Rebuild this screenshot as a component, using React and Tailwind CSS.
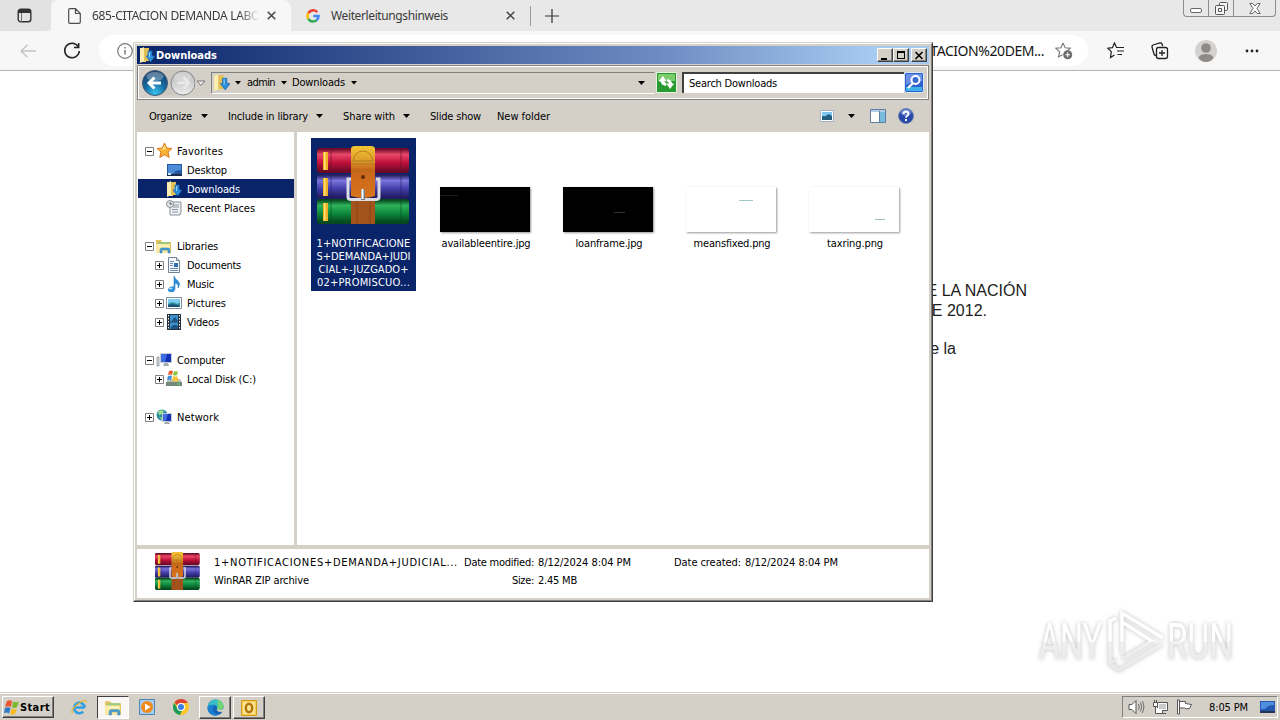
import React, { useLayoutEffect, useRef, useState } from "react";

const UI = "font-['DejaVu_Sans_Condensed','DejaVu_Sans',Verdana,sans-serif] text-[11px] leading-[13px]";

/* Single line of text whose tracking is adjusted to fill the width w. */
function T({ w, className = "", children }) {
  const ref = useRef(null);
  const [ls, setLs] = useState(0);
  useLayoutEffect(() => {
    const el = ref.current;
    const natural = el.getBoundingClientRect().width;
    setLs((w - natural) / el.textContent.length);
  }, [w]);
  return (
    <span ref={ref} className={"inline-block shrink-0 whitespace-nowrap " + className} style={{ letterSpacing: ls + "px" }}>
      {children}
    </span>
  );
}

function Arrow({ className = "" }) {
  return (
    <svg className={"shrink-0 " + className} width="7" height="4" viewBox="0 0 7 4">
      <path d="M0 0h7L3.5 4z" fill="#000" />
    </svg>
  );
}

function SmallArrow({ className = "" }) {
  return (
    <svg className={"shrink-0 " + className} width="6" height="4" viewBox="0 0 6 4">
      <path d="M0 0h6L3 3.500z" fill="#000" />
    </svg>
  );
}

function Books({ width, height, id }) {
  const rows = [
    [3, "#e8486a", "#c3123c", "#6d0a26"],
    [29, "#7a74dc", "#4540ac", "#221d62"],
    [54, "#2fb25c", "#0d8a3c", "#06491f"],
  ];
  return (
    <svg width={width} height={height} viewBox="0 0 93 80" preserveAspectRatio="none" className="shrink-0">
      <defs>
        {rows.map((r, i) => (
          <linearGradient key={i} id={id + i} x1="0" y1="0" x2="0" y2="1">
            <stop offset="0" stopColor={r[3]} />
            <stop offset=".25" stopColor={r[1]} />
            <stop offset=".6" stopColor={r[2]} />
            <stop offset="1" stopColor={r[3]} />
          </linearGradient>
        ))}
        <linearGradient id={id + "b"} x1="0" y1="0" x2="0" y2="1">
          <stop offset="0" stopColor="#f4c534" />
          <stop offset=".3" stopColor="#d99a2b" />
          <stop offset=".45" stopColor="#c9661a" />
          <stop offset="1" stopColor="#d9741c" />
        </linearGradient>
      </defs>
      {rows.map((r, i) => (
        <g key={i}>
          <rect x="0" y={r[0] - 1} width="92" height="25" rx="3" fill={r[3]} />
          <rect x="0" y={r[0]} width="92" height="22" rx="3" fill={"url(#" + id + i + ")"} />
          <path d={`M6 ${r[0] + 3}h5v18h-5z`} fill="#f0b128" />
          <path d={`M7 ${r[0] + 3}h1.500v18h-1.500z`} fill="#ffe271" />
          <path d={`M14 ${r[0] + 1}v21M84 ${r[0] + 1}v21`} stroke={r[3]} strokeWidth="1" opacity=".6" />
        </g>
      ))}
      <rect x="34" y="54" width="24" height="24" fill="#a3541c" />
      <path d="M40 54v24M53 54v24" stroke="#6d3410" opacity=".5" />
      <path d="M34 3q0-3 4-3h16q4 0 4 3v47q-12 4-24 0z" fill={"url(#" + id + "b)"} />
      <path d="M36 15q2-10 10-10t10 10zM34 18h24M34 25h24" stroke="#a9701a" fill="none" opacity=".8" />
      <circle cx="46" cy="31" r="2" fill="#5c2c0c" />
      <path d="M34 33h-3v18q0 2.500 3 2.500h25q3 0 3-2.500V33h-3" fill="none" stroke="#dcdce4" strokeWidth="3" />
      <path d="M46 43v11" stroke="#7d7d84" strokeWidth="4" />
      <path d="M45.500 43v10" stroke="#fff" strokeWidth="2" />
    </svg>
  );
}

function DownloadIcon({ size = 16 }) {
  return (
    <svg width={size} height={size} viewBox="0 0 16 16" className="shrink-0">
      <path d="M1 1h6v14H1z" fill="#f3dc88" />
      <path d="M1 2l4-2v14l-4 2z" fill="#fbeeb0" />
      <path d="M5 1h5v13H5z" fill="#e3bf58" />
      <path d="M9 4h4v5h3l-4.500 6L7 9h2z" fill="#2d8fdc" stroke="#1767ad" strokeWidth=".7" />
      <path d="M10 5h1v5h-1z" fill="#8fd0fb" />
    </svg>
  );
}

function FolderIcon({ w = 16, h = 16 }) {
  return (
    <svg width={w} height={h} viewBox="0 0 16 16" className="shrink-0">
      <path d="M0 2h5l1 2h9v11H0z" fill="#e6c35c" />
      <path d="M2 4h12v6H2z" fill="#9cca7a" />
      <path d="M0 6h14v9H0z" fill="#fbe9a3" />
      <path d="M2 8h11" stroke="#fff7cf" />
      <path d="M4 15v-3q0-2 2-2h6q2 0 2 2v3h-2v-3H6v3z" fill="#4a9fd4" stroke="#2a78ad" strokeWidth=".5" />
    </svg>
  );
}

const icons = {
  star: (
    <svg width="17" height="17" viewBox="0 0 17 17">
      <path d="M8.500 1l2.200 5 5.300.5-4 3.600 1.200 5.400-4.700-2.800-4.700 2.800L5 10.100 1 6.500 6.300 6z" fill="#f9b233" stroke="#d9771d" />
      <path d="M8.500 3l1.500 4-4 1z" fill="#ffe38a" />
    </svg>
  ),
  desktop: (
    <svg width="16" height="16" viewBox="0 0 16 16">
      <path d="M1 2h15v11H1z" fill="#2457a0" />
      <path d="M2 3h13v5q-6 0-8 4H2z" fill="#4b8bd8" />
      <path d="M1 12h15v2H1z" fill="#1b2d4d" />
      <path d="M2 11h3v2H2z" fill="#cfe4f8" />
    </svg>
  ),
  down: <DownloadIcon />,
  recent: (
    <svg width="16" height="16" viewBox="0 0 16 16">
      <path d="M4 2h11v10l-1 3H4z" fill="#eef0f2" stroke="#8a9097" />
      <path d="M7 5h6M7 7h6M6 9.500h6M6 12h6" stroke="#8b97a3" />
      <circle cx="4" cy="4" r="3.500" fill="#dfe6ec" stroke="#8a9097" />
      <path d="M4 2v2h2" stroke="#555" fill="none" />
    </svg>
  ),
  lib: <FolderIcon />,
  doc: (
    <svg width="16" height="16" viewBox="0 0 16 16">
      <path d="M2.500.5h8l3 3v12h-11z" fill="#f4f8fc" stroke="#74818e" />
      <path d="M10.500.5v3h3" fill="#dbe6f0" stroke="#74818e" />
      <path d="M4 4.500h4M4 6.500h3M4 8.500h3M4 11.500h8M4 13.500h8" stroke="#6d8db0" />
      <path d="M8 6h4v4H8z" fill="#2e6fb4" />
    </svg>
  ),
  music: (
    <svg width="16" height="16" viewBox="0 0 16 16">
      <path d="M8 0q1 3 4 5 3 3 0 7 1-4-3-5v6q-1 4-5 3-3-1-1-4 2-2 5-1V0z" fill="#2a8fdb" stroke="#1b6db4" strokeWidth=".5" />
      <ellipse cx="4.500" cy="12.500" rx="2" ry="1" fill="#a7daf9" />
    </svg>
  ),
  pic: (
    <svg width="16" height="16" viewBox="0 0 16 16">
      <path d="M.5 2.500h15v11H.5z" fill="#fff" stroke="#7e8b98" />
      <path d="M2 4h12v8H2z" fill="#7ccdf0" />
      <path d="M2 9q4-3 7-1t5-1v5H2z" fill="#2f8f98" />
      <path d="M2 10q6-2 12 1v1H2z" fill="#1c4f7c" />
    </svg>
  ),
  video: (
    <svg width="16" height="16" viewBox="0 0 16 16">
      <path d="M1 0h14v16H1z" fill="#23303c" />
      <path d="M4 1h8v6.500H4zM4 8.500h8V15H4z" fill="#3c93cf" />
      <path d="M6 6l3-3 3 4v.5H6zM5 13q3-4 7-1v3H5z" fill="#1e5385" />
      <path d="M2.500 1v14M13.500 1v14" stroke="#fff" strokeDasharray="1.500 1.500" />
    </svg>
  ),
  computer: (
    <svg width="17" height="16" viewBox="0 0 17 16">
      <path d="M1 5h2v9H1z" fill="#d9dde2" stroke="#7f868e" strokeWidth=".7" />
      <path d="M4 1h12v10H4z" fill="#c9ced6" />
      <path d="M5 2h10v8H5z" fill="#1733b5" />
      <path d="M5 2h6l-2 8H5z" fill="#3f6be0" />
      <path d="M8 11h4l1 3H7z" fill="#a8adb5" />
    </svg>
  ),
  disk: (
    <svg width="17" height="17" viewBox="0 0 17 17">
      <path d="M2 9h12l2 4v3H0v-3z" fill="#b7bcc1" />
      <path d="M0 12h16v4H0z" fill="#71877a" />
      <path d="M11 13.500h3v1h-3z" fill="#63e063" />
      <path d="M3 1q2-1 4 0L6 5Q4 4 2 5z" fill="#e8602c" />
      <path d="M8 1q2 1 4 0l-1 4q-2 1-4 0z" fill="#8cc63e" />
      <path d="M2 6q2-1 4 0l-1 4q-2-1-4 0z" fill="#3f8fdd" />
      <path d="M7 6q2 1 4 0l2 5q-4 1-7 0z" fill="#f5c23c" />
    </svg>
  ),
  network: (
    <svg width="17" height="16" viewBox="0 0 17 16">
      <circle cx="6" cy="6" r="5.500" fill="#2d8f9e" />
      <path d="M2 3q3-3 6-1L6 5 3 6zM3 8l4 1-1 2z" fill="#9be08a" />
      <path d="M6 4h10v9H6z" fill="#c5cbd3" />
      <path d="M7 5h8v7H7z" fill="#1733b5" />
      <path d="M7 5h5l-2 7H7z" fill="#3f6be0" />
      <path d="M9 13h4l1 2H8z" fill="#a8adb5" />
    </svg>
  ),
};

const tree = [
  ["Favorites", 46, "star", 0, "-"],
  ["Desktop", 40, "desktop", 1, ""],
  ["Downloads", 53, "down", 1, ""],
  ["Recent Places", 68, "recent", 1, ""],
  null,
  ["Libraries", 41, "lib", 0, "-"],
  ["Documents", 54, "doc", 1, "+"],
  ["Music", 27, "music", 1, "+"],
  ["Pictures", 39, "pic", 1, "+"],
  ["Videos", 32, "video", 1, "+"],
  null,
  ["Computer", 48, "computer", 0, "-"],
  ["Local Disk (C:)", 69, "disk", 1, "+"],
  null,
  ["Network", 42, "network", 0, "+"],
];

function Expander({ sign }) {
  if (!sign) return <span className="w-[9px] shrink-0" />;
  return (
    <svg width="9" height="9" viewBox="0 0 9 9" className="mt-[2px] shrink-0">
      <path d="M.5.5h8v8h-8z" fill="#fff" stroke="#808080" />
      <path d={sign === "+" ? "M2 4.500h5M4.500 2v5" : "M2 4.500h5"} stroke="#000" />
    </svg>
  );
}

function Tree() {
  return (
    <div className="w-[157px] shrink-0 bg-white pt-[9px]">
      {tree.map((r, i) =>
        r === null ? (
          <div key={i} className="h-[19px]" />
        ) : (
          <div
            key={i}
            className={
              "ml-px flex h-[19px] items-center " +
              (r[3] ? "pl-[17px] " : "pl-[7px] ") +
              (r[0] === "Downloads" ? "bg-[#0a246a] text-white" : "text-black")
            }
          >
            <Expander sign={r[4]} />
            <span className="ml-[2px] flex w-[17px] shrink-0 items-center">{icons[r[2]]}</span>
            <T w={r[1]} className="ml-[4px] mt-[2px]">{r[0]}</T>
          </div>
        )
      )}
    </div>
  );
}

function File({ name, w, dark, mark }) {
  return (
    <div className="flex h-[153px] w-[105px] flex-col items-center pt-[49px]">
      <div
        className={
          "mr-[3px] h-[45px] w-[90px] shadow-[1px_1px_2px_#999] " + (dark ? "bg-black " : "bg-white ") + mark[1]
        }
      >
        <div className={"h-px " + mark[0]} />
      </div>
      <div className="mr-[1px] mt-[5px] flex h-[13px] justify-center"><T w={w}>{name}</T></div>
    </div>
  );
}

function CaptionBtn({ children, className = "" }) {
  return (
    <div className={"flex h-[14px] w-4 items-center justify-center border border-b-[#404040] border-l-white border-r-[#404040] border-t-white bg-[#d4d0c8] shadow-[inset_-1px_-1px_#808080] " + className}>
      <svg width="10" height="9" viewBox="0 0 10 9">{children}</svg>
    </div>
  );
}

function ExplorerWindow() {
  return (
    <div className={"absolute left-[133px] top-[42px] flex h-[560px] w-[800px] flex-col border border-b-[#404040] border-l-[#d4d0c8] border-r-[#404040] border-t-[#d4d0c8] bg-[#d4d0c8] text-black " + UI}>
      <div className="flex min-h-0 flex-1 flex-col border border-b-[#808080] border-l-white border-r-[#808080] border-t-white pl-[2px] pt-[2px]">
        <div className="mr-[2px] flex h-[18px] shrink-0 items-center bg-[linear-gradient(90deg,#0a246a,#6f8ec4_67%,#a6caf0_93%)] pl-[2px] pr-[2px]">
          <DownloadIcon />
          <T w={61} className="ml-[1px] font-bold text-white">Downloads</T>
          <CaptionBtn className="ml-auto"><path d="M1 7h6v2H1z" /></CaptionBtn>
          <CaptionBtn><path d="M1 0h8v8H1zM2 2v5h6V2z" fillRule="evenodd" /></CaptionBtn>
          <CaptionBtn className="ml-[2px]"><path d="M1.500 1l7 7M8.500 1l-7 7" stroke="#000" strokeWidth="1.600" /></CaptionBtn>
        </div>

        <div className="mr-[2px] mt-[1px] flex h-[35px] shrink-0 items-center border border-[#808080] pl-[3px] shadow-[inset_1px_1px_#fff,inset_-1px_-1px_#fff]">
          <svg width="54" height="28" viewBox="0 0 54 28" className="mt-px shrink-0">
            <defs>
              <radialGradient id="back" cx=".5" cy=".9" r=".9">
                <stop offset="0" stopColor="#37c3ef" />
                <stop offset=".5" stopColor="#15699f" />
                <stop offset="1" stopColor="#1c4068" />
              </radialGradient>
              <linearGradient id="fwd" x1="0" y1="0" x2="0" y2="1">
                <stop offset="0" stopColor="#b9b9b9" />
                <stop offset=".5" stopColor="#cfcfcf" />
                <stop offset="1" stopColor="#eee" />
              </linearGradient>
            </defs>
            <path d="M2 8Q6 1 14 1h28q8 0 11 7v10q-3 8-11 8H14Q6 26 2 18z" fill="#c3bfb8" opacity=".5" />
            <circle cx="14" cy="14" r="12.500" fill="url(#back)" stroke="#3c5878" />
            <ellipse cx="14" cy="7.500" rx="8.500" ry="4.500" fill="#fff" opacity=".3" />
            <path d="M20 14H9M13.500 8.500L8 14l5.500 5.500" fill="none" stroke="#fff" strokeWidth="3" />
            <circle cx="42" cy="14" r="12" fill="url(#fwd)" stroke="#84888c" />
            <ellipse cx="42" cy="8" rx="8.500" ry="5" fill="#fff" opacity=".3" />
            <path d="M36 14h11M42.500 8.500L48 14l-5.500 5.500" fill="none" stroke="#e9e9e9" strokeWidth="2.500" />
          </svg>
          <svg width="10" height="7" viewBox="0 0 10 7" className="ml-px mt-px shrink-0">
            <path d="M1 1h8L5 5.500z" fill="#eee" stroke="#777" />
          </svg>
          <div className="ml-[5px] flex h-[22px] w-[444px] shrink-0 items-center border border-b-white border-l-[#808080] border-r-[#d4d0c8] border-t-[#808080] pl-[1px]">
            <DownloadIcon size={17} />
            <SmallArrow className="ml-[5px]" />
            <T w={28} className="ml-[6px]">admin</T>
            <SmallArrow className="ml-[6px]" />
            <T w={53} className="ml-[5px]">Downloads</T>
            <SmallArrow className="ml-[6px]" />
            <Arrow className="ml-auto mr-[9px]" />
          </div>
          <svg width="21" height="21" viewBox="0 0 21 21" className="ml-[1px] shrink-0">
            <path d="M.5.5h20v20H.5z" fill="#299a31" stroke="#e5f5e0" />
            <path d="M2 2h17v7H2z" fill="#7ccb6d" />
            <path d="M7 4v3q0 3 3.500 4v2.500Q5 13 4.500 9H3z" fill="#fff" />
            <path d="M2.800 9.500L7 4l3.500 5.500H8q.5 1.500 2 2v2.500Q5 13 5 9.500z" fill="#fff" />
            <path d="M18.200 11.500L14 17l-3.500-5.500H13q-.5-1.500-2-2V7q5 1 5 4.500z" fill="#fff" />
          </svg>
          <div className="ml-[5px] flex h-[21px] w-[222px] shrink-0 items-center border-l-2 border-t-2 border-l-[#404040] border-t-[#404040] bg-white pl-[5px] pb-px">
            <T w={88}>Search Downloads</T>
          </div>
          <svg width="20" height="21" viewBox="0 0 20 21" className="shrink-0">
            <rect x=".5" y=".5" width="19" height="20" rx="2" fill="#2c62cd" stroke="#dce6f5" />
            <path d="M2 2h16v7Q9 9 2 13z" fill="#6c91e4" />
            <path d="M2 15h16v4H2z" fill="#3fb3e9" />
            <circle cx="11.500" cy="8" r="4" fill="#3b6ace" stroke="#fff" strokeWidth="2" />
            <path d="M8.500 11.500L4 16" stroke="#fff" strokeWidth="2.400" />
          </svg>
        </div>

        <div className="flex h-[32px] shrink-0 items-center pl-[12px] pr-[17px]">
          <T w={43}>Organize</T>
          <Arrow className="ml-[9px]" />
          <T w={80} className="ml-[20px]">Include in library</T>
          <Arrow className="ml-[8px]" />
          <T w={52} className="ml-[20px]">Share with</T>
          <Arrow className="ml-[8px]" />
          <T w={51} className="ml-[20px]">Slide show</T>
          <T w={53} className="ml-[16px]">New folder</T>
          <svg width="14" height="12" viewBox="0 0 14 12" className="ml-auto">
            <path d="M.5.5h13v11H.5z" fill="#fff" stroke="#9fb3c5" />
            <path d="M2 2h10v7H2z" fill="#7cc3ed" />
            <path d="M2 6q4 1 5-1t5 1v4H2z" fill="#235d7d" />
          </svg>
          <Arrow className="ml-[14px]" />
          <svg width="16" height="14" viewBox="0 0 16 14" className="ml-[15px]">
            <path d="M.5.500h15v13H.5z" fill="#fff" stroke="#5b7fa4" />
            <path d="M1 1h14v2H1z" fill="#b4cde4" />
            <path d="M10 3h5v10h-5z" fill="#77bbdf" />
            <path d="M9.500 2v11" stroke="#5b7fa4" />
          </svg>
          <svg width="16" height="16" viewBox="0 0 16 16" className="ml-[12px]">
            <circle cx="8" cy="8" r="7.500" fill="#2647a7" stroke="#6f83b5" />
            <ellipse cx="8" cy="4.500" rx="5.500" ry="3.500" fill="#7b97dc" opacity=".7" />
            <path d="M5.500 6q0-2.500 2.500-2.500T10.500 6Q10.500 7 9 8q-1 .6-1 1.800" fill="none" stroke="#fff" strokeWidth="1.800" />
            <path d="M7 11h2v2H7z" fill="#fff" />
          </svg>
        </div>

        <div className="-ml-px flex h-[413px] shrink-0 bg-[#d4d0c8] pl-px pr-[2px]">
          <Tree />
          <div className="ml-[3px] flex min-w-0 flex-1 gap-[18px] bg-white pl-[14px] pt-[6px]">
            <div className="flex h-[153px] w-[105px] flex-col items-center bg-[#0a246a] pt-[8px] text-white">
              <Books width={93} height={80} id="big" />
              <div className="mt-[11px] flex flex-col items-center">
                <T w={94}>1+NOTIFICACIONE</T>
                <T w={94}>S+DEMANDA+JUDI</T>
                <T w={90}>CIAL+-JUZGADO+</T>
                <T w={93}>02+PROMISCUO...</T>
              </div>
            </div>
            <File name="availableentire.jpg" w={89} dark mark={["w-[18px] bg-[#1c1c1c]", "pt-[8px]"]} />
            <File name="loanframe.jpg" w={67} dark mark={["w-[11px] bg-[#3a3028]", "pl-[51px] pt-[25px]"]} />
            <File name="meansfixed.png" w={77} mark={["w-[14px] bg-[#9fc8c8]", "pl-[53px] pt-[13px]"]} />
            <File name="taxring.png" w={56} mark={["w-[10px] bg-[#9fb8b8]", "pl-[66px] pt-[32px]"]} />
          </div>
        </div>

        <div className="mr-[2px] mt-[4px] flex h-[49px] shrink-0 bg-white pl-[18px] pt-[3px]">
          <Books width={45} height={39} id="small" />
          <div className="ml-[14px] mt-[4px] flex w-[246px] flex-col gap-[5px]">
            <T w={244} className="self-start">1+NOTIFICACIONES+DEMANDA+JUDICIAL...</T>
            <T w={95} className="self-start">WinRAR ZIP archive</T>
          </div>
          <div className="ml-[4px] mt-[4px] flex w-[70px] flex-col items-end gap-[5px]">
            <T w={70}>Date modified:</T>
            <T w={22}>Size:</T>
          </div>
          <div className="ml-[4px] mt-[4px] flex w-[136px] flex-col items-start gap-[5px]">
            <T w={93}>8/12/2024 8:04 PM</T>
            <T w={39}>2.45 MB</T>
          </div>
          <T w={67} className="mt-[4px]">Date created:</T>
          <T w={93} className="ml-[4px] mt-[4px]">8/12/2024 8:04 PM</T>
        </div>
      </div>
    </div>
  );
}

function BrowserTabs() {
  return (
    <div className="flex h-[31px] shrink-0 bg-[#e8e8e8] text-[12px] text-[#3b3b3b]">
      <div className="flex w-[51px] items-center justify-center rounded-br-[7px] bg-[#e2e2e2]">
        <svg width="15" height="15" viewBox="0 0 15 15" className="mr-[3px]">
          <rect x="1.200" y="1.200" width="12.600" height="12.600" rx="2.500" fill="none" stroke="#333" strokeWidth="1.400" />
          <path d="M1 2h13v3H1z" fill="#333" />
          <path d="M4.500 5v9" stroke="#777" />
        </svg>
      </div>
      <div className="flex w-[240px] items-center rounded-t-[8px] bg-[#f7f7f7] pl-[17px]">
        <svg width="13" height="16" viewBox="0 0 13 16">
          <path d="M2 .7h5.500L12.300 5.500V14q0 1.300-1.300 1.300H2Q.7 15.300.7 14V2Q.7.7 2 .7zM7.500 1v4.500H12" fill="none" stroke="#4d4d4d" strokeWidth="1.200" />
        </svg>
        <div className="ml-[11px] w-[167px] overflow-hidden [mask-image:linear-gradient(90deg,#000_88%,transparent)]">
          <T w={168} className="font-['Noto_Sans','Open_Sans',sans-serif]">685-CITACION DEMANDA LABO</T>
        </div>
        <svg width="9" height="9" viewBox="0 0 9 9" className="ml-[8px]"><path d="M.7.7l7.600 7.600M8.300.7L.7 8.300" stroke="#444" strokeWidth="1.500" /></svg>
      </div>
      <div className="flex w-[239px] items-center border-r border-[#e8e8e8] pl-[15px]">
        <svg width="14" height="14" viewBox="0 0 14 14" fill="none" strokeWidth="2.600">
          <path d="M11.300 3.200A5.500 5.500 0 0 0 2.300 4.200" stroke="#ea4335" />
          <path d="M2.300 4.200a5.500 5.500 0 0 0 0 5.600" stroke="#fbbc05" />
          <path d="M2.300 9.800a5.500 5.500 0 0 0 8.400 1.300" stroke="#34a853" />
          <path d="M10.700 11.100A5.500 5.500 0 0 0 12.500 7H7.300" stroke="#4285f4" />
        </svg>
        <T w={117} className="ml-[11px] font-['Noto_Sans','Open_Sans',sans-serif]">Weiterleitungshinweis</T>
        <svg width="9" height="9" viewBox="0 0 9 9" className="ml-[58px]"><path d="M.7.7l7.600 7.600M8.300.7L.7 8.300" stroke="#444" strokeWidth="1.500" /></svg>
      </div>
      <div className="mt-[6px] h-[20px] w-px bg-[#999]" />
      <svg width="14" height="14" viewBox="0 0 14 14" className="ml-[14px] mt-[9px]"><path d="M7 0v14M0 7h14" stroke="#333" strokeWidth="1.200" /></svg>
      <div className="ml-auto mr-[4px] flex h-[17px] w-[93px] rounded-b-[4px] border border-t-0 border-[#8c8c8c]">
        <div className="flex w-[25px] items-end justify-center border-r border-[#8c8c8c] pb-[3px]">
          <svg width="13" height="5" viewBox="0 0 13 5"><rect x=".5" y=".5" width="11" height="4" rx="1.500" fill="#fff" stroke="#666" /></svg>
        </div>
        <div className="flex w-[25px] items-center justify-center border-r border-[#8c8c8c]">
          <svg width="13" height="13" viewBox="0 0 13 13" fill="#f4f4f4" stroke="#555">
            <rect x="4.500" y=".5" width="8" height="8" rx="1" /><rect x=".5" y="3.500" width="9" height="9" rx="1" /><path d="M3.500 6.500h3v3h-3z" />
          </svg>
        </div>
        <div className="flex flex-1 items-center justify-center">
          <svg width="12" height="11" viewBox="0 0 12 11"><path d="M.8.5h3L6 3 8.200.5h3L8 5.500l3.200 5h-3L6 8l-2.200 2.500h-3L4 5.500z" fill="#fff" stroke="#666" /></svg>
        </div>
      </div>
    </div>
  );
}

function BrowserBar() {
  return (
    <div className="flex h-[40px] shrink-0 items-center border-b border-[#b4b4b4] bg-[#f7f7f7] pl-[20px]">
      <svg width="17" height="14" viewBox="0 0 17 14" fill="none" stroke="#c2c2c2" strokeWidth="1.300"><path d="M16 7H1M7.500.7L1 7l6.500 6.300" /></svg>
      <svg width="18" height="18" viewBox="0 0 18 18" className="ml-[26px]" fill="none" stroke="#222" strokeWidth="1.500">
        <path d="M15 4.300A7.300 7.300 0 1 0 16.300 9M15.700 1v4.500H11" />
      </svg>
      <div className="ml-[18px] flex h-[31px] w-[989px] items-center justify-end rounded-full bg-white pl-[18px] pr-[14px]">
        <svg width="16" height="16" viewBox="0 0 16 16" className="mr-auto" fill="none" stroke="#777">
          <circle cx="8" cy="8" r="7.300" strokeWidth="1.200" /><path d="M8 7v4.500M8 4v1.500" strokeWidth="1.500" />
        </svg>
        <T w={118} className="font-['Noto_Sans','Open_Sans',sans-serif] text-[14px] text-[#151515]">ITACION%20DEM...</T>
        <svg width="18" height="18" viewBox="0 0 18 18" className="ml-[11px] mr-px" fill="none" stroke="#777" strokeWidth="1.100">
          <path d="M8 1l2.100 4.700 5.200.5-3.800 3.500M8 1L5.900 5.700.7 6.200l4 3.700L3.500 15l4-2.300" />
          <circle cx="12.700" cy="12.700" r="4.500" fill="#6a6a6a" stroke="none" /><path d="M10.200 12.700h5M12.700 10.200v5" stroke="#fff" />
        </svg>
      </div>
      <svg width="17" height="17" viewBox="0 0 17 17" className="ml-[19px]" fill="none" stroke="#222" strokeWidth="1.200">
        <path d="M11 5.500H9.500L7.500 1 5.400 5.700.8 6.200l3.500 3.500L3.500 15.500l4-2.500M11 5.500h6M10 9h7M10.500 12.500H15" />
      </svg>
      <svg width="18" height="18" viewBox="0 0 18 18" className="ml-[27px]" fill="none" stroke="#222" strokeWidth="1.300">
        <path d="M5 13.500Q3.300 13.500 3 12L1 5Q.8 3.500 2 3l7-2q1.500-.3 2 1l.7 2" />
        <rect x="5.500" y="5.500" width="11" height="11" rx="2" /><path d="M11 8v6M8 11h6" />
      </svg>
      <svg width="22" height="22" viewBox="0 0 22 22" className="ml-[26px]">
        <circle cx="11" cy="11" r="11" fill="#d4d2d0" /><circle cx="11" cy="8" r="4.800" fill="#8f8b88" />
        <path d="M3.500 18q1-4 7.500-4t7.500 4q-3 4-7.500 4t-7.500-4z" fill="#8f8b88" />
      </svg>
      <svg width="14" height="4" viewBox="0 0 14 4" className="ml-[28px]" fill="#222"><circle cx="2" cy="2" r="1.400" /><circle cx="7" cy="2" r="1.400" /><circle cx="12" cy="2" r="1.400" /></svg>
    </div>
  );
}

function Watermark() {
  return (
    <svg className="absolute left-[1030px] top-[604px] drop-shadow-[0_0_2px_rgba(0,0,0,0.26)]" width="230" height="84" viewBox="0 0 230 84">
      <defs>
        <linearGradient id="wm" gradientUnits="userSpaceOnUse" x1="0" y1="10" x2="0" y2="66">
          <stop offset="0" stopColor="#fff" /><stop offset=".48" stopColor="#fff" /><stop offset=".5" stopColor="#f0f0f0" /><stop offset="1" stopColor="#e9e9e9" />
        </linearGradient>
      </defs>
      <g fill="url(#wm)" fontFamily="Roboto, sans-serif" fontSize="50">
        <text x="9" y="55" textLength="63" lengthAdjust="spacingAndGlyphs">ANY</text>
        <text x="137" y="55" textLength="66" lengthAdjust="spacingAndGlyphs">RUN</text>
      </g>
      <g fill="none" stroke="url(#wm)" strokeWidth="3.500">
        <path d="M86 14l-6 3v42l6-3" />
        <path d="M92 50V9l41 25M92 18l30 19-30 18" />
        <path d="M81 61l8 5 43-26" />
      </g>
    </svg>
  );
}

function TaskBtn({ children, pressed }) {
  return (
    <div
      className={
        "flex h-[23px] w-[32px] items-center justify-center border " +
        (pressed
          ? "border-b-white border-l-[#404040] border-r-white border-t-[#404040] bg-[#f8f7f5]"
          : "border-b-[#404040] border-l-white border-r-[#404040] border-t-white bg-[#d4d0c8] shadow-[inset_-1px_-1px_#808080]")
      }
    >
      {children}
    </div>
  );
}

function Taskbar() {
  return (
    <div className={"flex h-[28px] shrink-0 items-start border-t border-[#d4d0c8] bg-[#d4d0c8] pl-[2px] pt-[3px] text-black shadow-[inset_0_1px_#fff] " + UI}>
      <div className="flex h-[22px] w-[52px] items-center border border-b-[#404040] border-l-white border-r-[#404040] border-t-white pl-[1px] shadow-[inset_-1px_-1px_#808080]">
        <svg width="16" height="15" viewBox="0 0 16 15">
          <path d="M3 1q3-1.500 5 0L7 7Q4.500 5.500 1 7z" fill="#e8562a" />
          <path d="M9 1.500q3 1.500 6 0L13 7q-2.500 1.500-5 .5z" fill="#7cb82f" />
          <path d="M1 8q3-1.500 5.500 0L5 13.500Q3 12 0 13z" fill="#2f77c9" />
          <path d="M7.500 8.500q3 1.500 5.500 0l-2 5.500q-2.500 1.500-5 0z" fill="#f6bb26" />
        </svg>
        <T w={30} className="font-bold">Start</T>
      </div>
      <div className="ml-[17px] flex h-[22px] w-[17px] items-center">
        <svg width="17" height="17" viewBox="0 0 17 17" fill="none">
          <path d="M13.500 8.500H4.500M13.700 8.500a5.300 5.300 0 1 0-1.500 4.200" stroke="#2f9fe0" strokeWidth="2.600" />
          <path d="M1.500 14.500Q-1 11 7 5q8-6 8.500-1.500" stroke="#e9b93a" strokeWidth="1.300" />
        </svg>
      </div>
      <div className="ml-[9px]"><TaskBtn pressed><FolderIcon w={17} h={17} /></TaskBtn></div>
      <div className="ml-[10px] flex h-[22px] items-center">
        <svg width="16" height="16" viewBox="0 0 16 16">
          <path d="M.5.5h15v15H.5z" fill="#a9cdee" stroke="#4c84bd" /><circle cx="8" cy="8" r="6" fill="#f08a1d" /><path d="M6 4.500l5.500 3.500L6 11.500z" fill="#fff" />
        </svg>
      </div>
      <div className="ml-[18px] flex h-[22px] items-center">
        <svg width="16" height="16" viewBox="0 0 16 16">
          <circle cx="8" cy="8" r="8" fill="#f9c62b" />
          <path d="M8 0a8 8 0 0 1 7 4H8a4 4 0 0 0-3.700 2.500L1.500 3.300A8 8 0 0 1 8 0z" fill="#db4437" />
          <path d="M1.300 3.700L4.600 10A4 4 0 0 0 8.700 12L7 16A8 8 0 0 1 1.300 3.700z" fill="#1a9c57" />
          <circle cx="8" cy="8" r="4" fill="#fff" /><circle cx="8" cy="8" r="3" fill="#3f7ee8" />
        </svg>
      </div>
      <div className="ml-[10px] flex gap-[2px]">
        <TaskBtn>
          <svg width="17" height="17" viewBox="0 0 17 17">
            <circle cx="8.500" cy="8.500" r="8" fill="#1464b4" />
            <path d="M.7 8Q2 .5 9 .5q7 .5 7.500 6.500 0 4-5 4-2 0-1.500-1 .8-3-2-4Q4 5 .7 8z" fill="#39bfc4" />
            <path d="M10 1q6 1 6.500 6 0 4-5 4-2 0-1.500-1 2-4 0-9z" fill="#6fd672" />
            <path d="M10 10q-1 2 3 3l3.500-.5-1 2Q15 15 17 11L16.500 10 12 11z" fill="#d4d0c8" />
            <path d="M.7 8Q4 4 8 7q-3 1-2 5 2 4 7 3-7 4-11-1.500Q0 11 .7 8z" fill="#1d7fd1" />
          </svg>
        </TaskBtn>
        <TaskBtn>
          <svg width="16" height="16" viewBox="0 0 16 16">
            <path d="M.5.5h15v15H.5z" fill="#f6cf50" stroke="#d39b16" /><path d="M2 2h12v12H2z" fill="#fae394" />
            <ellipse cx="8" cy="8" rx="3.200" ry="4.200" fill="none" stroke="#b27608" strokeWidth="2.400" />
          </svg>
        </TaskBtn>
      </div>
      <div className="ml-auto mr-[2px] flex h-[22px] w-[156px] items-center border border-b-white border-l-[#808080] border-r-white border-t-[#808080] pl-[5px]">
        <svg width="17" height="16" viewBox="0 0 17 16" fill="#fff" stroke="#555">
          <path d="M1 5.500h3l4-4v13l-4-4H1z" /><path d="M10.500 5q1.500 3 0 6M12.500 3.500q2.500 4.500 0 9M14.500 2q3 6 0 12" fill="none" strokeWidth=".8" />
        </svg>
        <svg width="17" height="16" viewBox="0 0 17 16" className="ml-[7px]" fill="#fff" stroke="#555">
          <path d="M5.500 3.500h10v8h-10zM8 14.500h6" /><path d="M1.500 3.500h4v4h-4zM2.500 1v2M4.500 1v2M3.500 8v6.500h7v-3" /><path d="M7 5h7v5H7z" fill="#c9c9c9" stroke="none" />
        </svg>
        <svg width="17" height="16" viewBox="0 0 17 16" className="ml-[7px]" fill="#fff" stroke="#555">
          <path d="M1.500 1v14h2V1zM3.500 2.500h6v2l6 1-2 4q-4 1-5-.5h-5z" />
        </svg>
        <T w={39} className="ml-[16px]">8:05 PM</T>
        <svg width="16" height="14" viewBox="0 0 16 14" className="ml-[12px]">
          <path d="M0 1h15v10H0z" fill="#2457b0" /><path d="M1 2h13v3q-6 0-9 4H1z" fill="#4e8fe0" /><path d="M0 11h15v2H0z" fill="#26354f" />
        </svg>
      </div>
    </div>
  );
}

export default function App() {
  return (
    <div className="relative flex h-[720px] w-[1280px] flex-col overflow-hidden bg-white">
      <BrowserTabs />
      <BrowserBar />
      <div className="min-h-0 flex-1 pt-[210px] font-['Liberation_Sans',Arial,sans-serif] text-[16px] leading-[19.500px] text-[#1c1c1c]">
        <div className="w-[1027px] text-right">E LA NACIÓN</div>
        <div className="w-[987px] text-right">E 2012.</div>
        <div className="mt-[19px] w-[956px] text-right">e la</div>
      </div>
      <Taskbar />
      <Watermark />
      <ExplorerWindow />
    </div>
  );
}
